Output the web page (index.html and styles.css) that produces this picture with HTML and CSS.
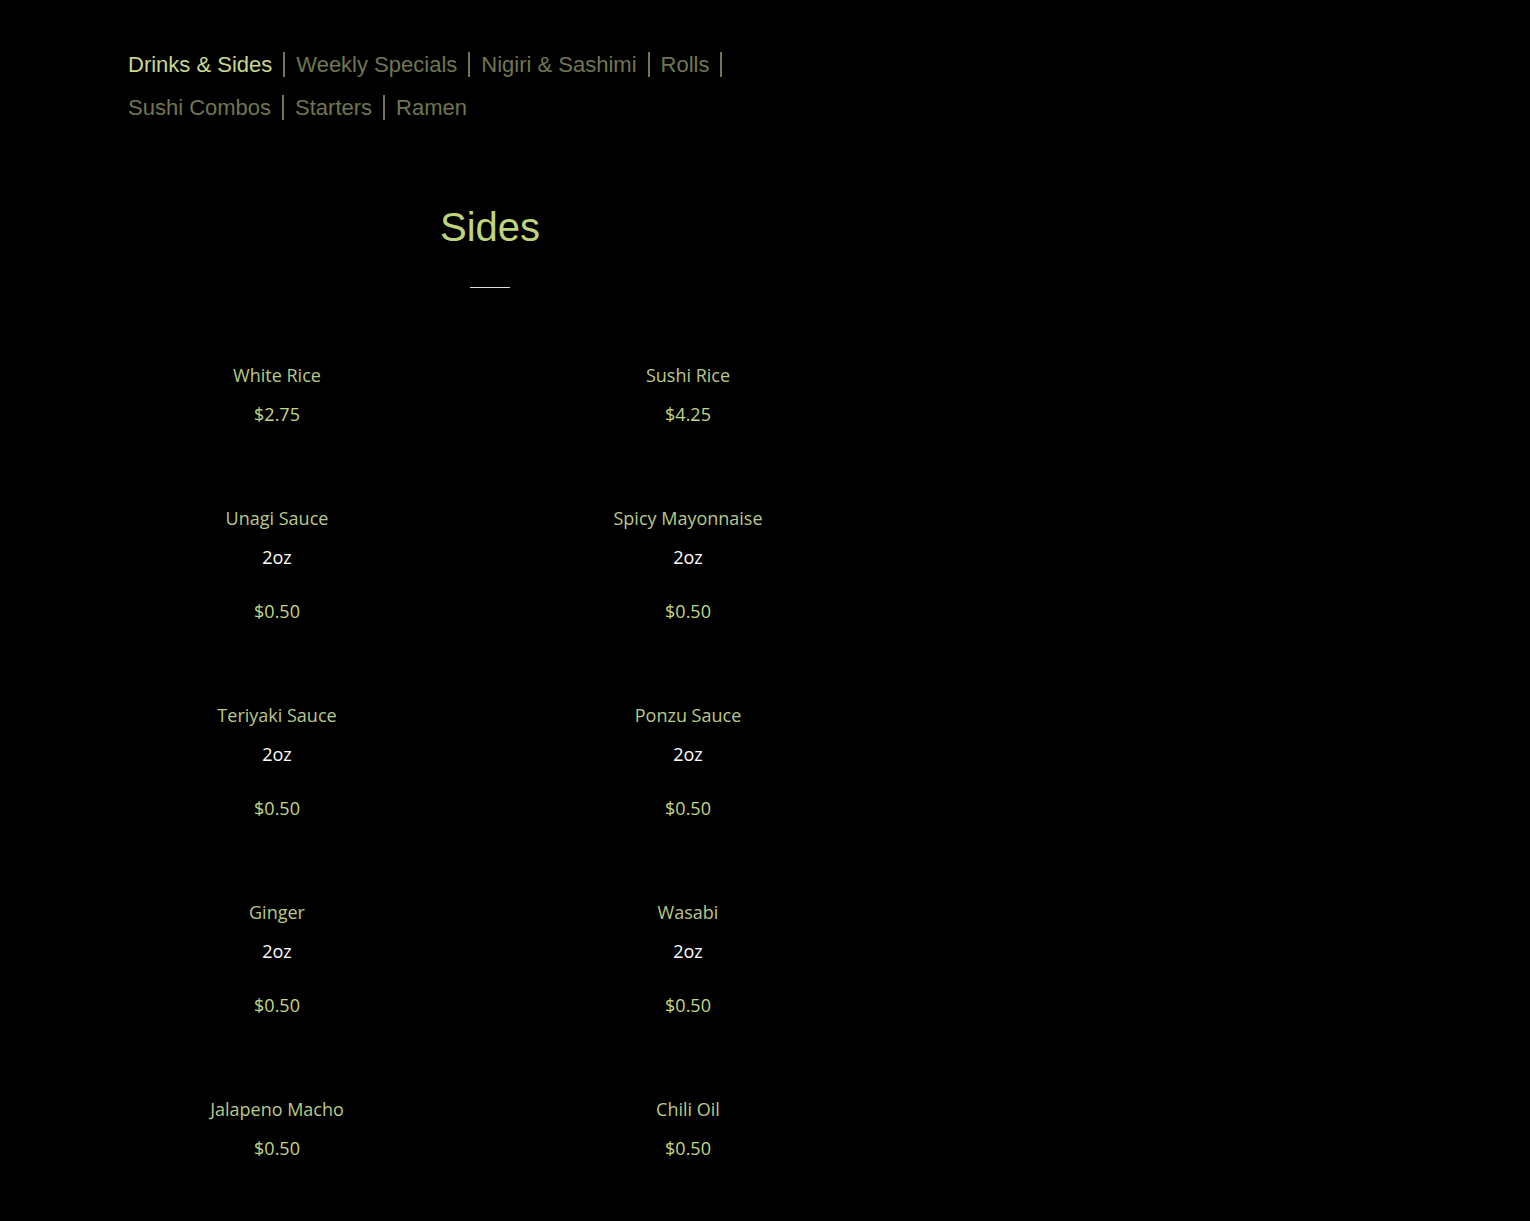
FILE: index.html
```html
<!DOCTYPE html>
<html lang="en">
<head>
  <meta charset="UTF-8" />
  <meta name="viewport" content="width=device-width, initial-scale=1.0" />
  <title>Menu | Sides</title>
  <link rel="stylesheet" href="styles.css">
</head>
<body>
  <div class="page">
    <nav class="menu-nav">
      <a href="#" class="nav-link active">Drinks &amp; Sides</a><span class="sep"></span>
      <a href="#" class="nav-link">Weekly Specials</a><span class="sep"></span>
      <a href="#" class="nav-link">Nigiri &amp; Sashimi</a><span class="sep"></span>
      <a href="#" class="nav-link">Rolls</a><span class="sep"></span>
      <a href="#" class="nav-link">Sushi Combos</a><span class="sep"></span>
      <a href="#" class="nav-link">Starters</a><span class="sep"></span>
      <a href="#" class="nav-link">Ramen</a>
    </nav>

    <section class="menu-section">
      <h2>Sides</h2>
      <div class="rule"></div>

      <div class="items">
        <div class="item">
          <p class="name">White Rice</p>
          <p class="price">$2.75</p>
        </div>
        <div class="item">
          <p class="name">Sushi Rice</p>
          <p class="price">$4.25</p>
        </div>
        <div class="item">
          <p class="name">Unagi Sauce</p>
          <p class="size">2oz</p>
          <p class="price">$0.50</p>
        </div>
        <div class="item">
          <p class="name">Spicy Mayonnaise</p>
          <p class="size">2oz</p>
          <p class="price">$0.50</p>
        </div>
        <div class="item">
          <p class="name">Teriyaki Sauce</p>
          <p class="size">2oz</p>
          <p class="price">$0.50</p>
        </div>
        <div class="item">
          <p class="name">Ponzu Sauce</p>
          <p class="size">2oz</p>
          <p class="price">$0.50</p>
        </div>
        <div class="item">
          <p class="name">Ginger</p>
          <p class="size">2oz</p>
          <p class="price">$0.50</p>
        </div>
        <div class="item">
          <p class="name">Wasabi</p>
          <p class="size">2oz</p>
          <p class="price">$0.50</p>
        </div>
        <div class="item">
          <p class="name">Jalapeno Macho</p>
          <p class="price">$0.50</p>
        </div>
        <div class="item">
          <p class="name">Chili Oil</p>
          <p class="price">$0.50</p>
        </div>
      </div>
    </section>
  </div>
</body>
</html>
```

FILE: styles.css
```css
* {
  margin: 0;
  padding: 0;
  box-sizing: border-box;
}

html, body {
  background: #000;
  color: #fff;
  font-family: 'Liberation Sans', Arial, sans-serif;
}

.page {
  width: 724px;
  margin-left: 128px;
  padding-top: 43px;
  padding-bottom: 60px;
}

.menu-nav {
  display: flex;
  flex-wrap: wrap;
  align-items: center;
  font-size: 22px;
  line-height: 43px;
}

.nav-link {
  color: #6f7650;
  text-decoration: none;
}

.nav-link.active {
  color: #c6d98e;
}

.sep {
  display: inline-block;
  width: 2px;
  height: 25px;
  margin: 0 11px;
  background: #6f7650;
}

.menu-section {
  margin-top: 74px;
}

.menu-section h2 {
  text-align: center;
  font-weight: normal;
  font-size: 40px;
  line-height: 48px;
  color: #bfd47a;
}

.rule {
  width: 40px;
  height: 1px;
  margin: 36px auto 74px;
  background: #ddd;
}

.items {
  display: grid;
  grid-template-columns: 298px 298px;
  column-gap: 113px;
  row-gap: 78px;
  font-family: 'Open Sans', sans-serif;
  font-size: 18px;
  line-height: 26px;
  text-align: center;
}

.name {
  color: #b9c98a;
  margin-bottom: 13px;
}

.size {
  color: #fff;
  margin-bottom: 28px;
}

.price {
  color: #c2d68a;
}
```
